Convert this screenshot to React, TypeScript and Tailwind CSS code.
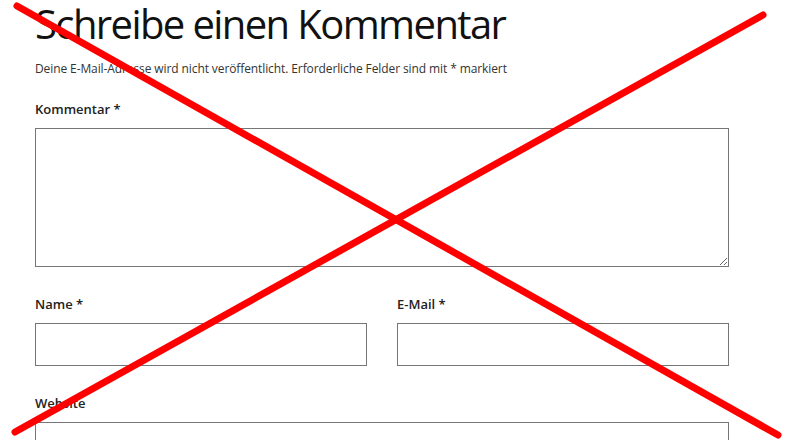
import React from "react";

const fieldLabel = "block text-[13px] font-semibold text-[#222] leading-5";
const fieldBox = "block w-full border border-[#767676] bg-white";

function CrossOut() {
  return (
    <svg
      className="absolute inset-0 pointer-events-none"
      width="800"
      height="440"
      viewBox="0 0 800 440"
    >
      <line x1="17" y1="6" x2="778" y2="435" stroke="#ff0000" strokeWidth="7" strokeLinecap="round" />
      <line x1="763" y1="15" x2="15" y2="432" stroke="#ff0000" strokeWidth="7" strokeLinecap="round" />
    </svg>
  );
}

export default function App() {
  return (
    <div className="relative w-[800px] h-[440px] overflow-hidden bg-white font-['Open_Sans',sans-serif]">
      <div className="pl-[35px] pt-[1px] w-[729px]">
        {/* Comment form header */}
        <h2 className="text-[40px] leading-[46px] font-normal text-[#111] tracking-[-1.6px]">
          Schreibe einen Kommentar
        </h2>
        <p className="mt-[12px] text-[12px] leading-5 text-[#333] tracking-[-0.1px]">
          Deine E-Mail-Adresse wird nicht veröffentlicht. Erforderliche Felder sind mit * markiert
        </p>

        {/* Comment */}
        <div className="mt-[20px]">
          <label className={fieldLabel}>Kommentar *</label>
          <textarea className={`${fieldBox} mt-[9px] h-[139px] resize`} />
        </div>

        {/* Name / E-Mail */}
        <div className="grid grid-cols-2 gap-[30px] mt-[27px]">
          <div>
            <label className={fieldLabel}>Name *</label>
            <input className={`${fieldBox} mt-[9px] h-[43px]`} />
          </div>
          <div>
            <label className={fieldLabel}>E-Mail *</label>
            <input className={`${fieldBox} mt-[9px] h-[43px]`} />
          </div>
        </div>

        {/* Website */}
        <div className="mt-[27px]">
          <label className={fieldLabel}>Website</label>
          <input className={`${fieldBox} mt-[9px] h-[43px]`} />
        </div>
      </div>
      <CrossOut />
    </div>
  );
}
